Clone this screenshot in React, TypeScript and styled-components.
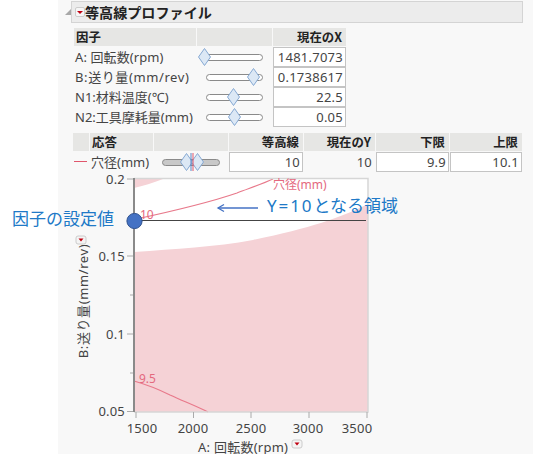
import React from "react";
import styled, { createGlobalStyle } from "styled-components";

const Global = createGlobalStyle`
  html, body { margin: 0; padding: 0; background: #fff; }
  body { width: 533px; height: 454px; overflow: hidden; font-family: "Noto Sans", "Noto Sans CJK JP", sans-serif; color: #333; }
`;
const Page = styled.div`
  position: relative; width: 533px; height: 454px; overflow: hidden;
`;
const Panel = styled.div`
  width: 475px; height: 454px; margin-left: 58px; background: #f8f8f8; padding-top: 1px; box-sizing: border-box;
`;
const Outline = styled.div`
  position: relative; height: 22px; width: 452px; margin-left: 13px; box-sizing: border-box; background: #ececec; border: 1px solid #d4d4d4;
  display: flex; align-items: center; padding-left: 3px;
`;
const Disclosure = styled.span`
  position: absolute; left: -7px; top: 7px; width: 0; height: 0; border-style: solid; border-width: 0 0 6px 6px; border-color: transparent transparent #a8a8a8 transparent;
`;
const RedMenu = styled.span`
  display: inline-flex; align-items: center; justify-content: center; width: 8px; height: 8px; background: #f6f6f6; border: 1px solid #ccc; border-radius: 2px; flex: none;
  &::after { content: ""; border-style: solid; border-width: 3px 3px 0 3px; border-color: #c00010 transparent transparent transparent; }
`;
const Title = styled.span`
  font: 700 14.1px/20px "Noto Sans CJK JP", sans-serif; color: #222;
`;
const FactorGrid = styled.div`
  display: grid; grid-template-columns: 122px 75px 73px; column-gap: 1px; margin: 5px 0 0 16px;
`;
const Head = styled.div<{ $right?: boolean }>`
  height: 18px; margin-bottom: 1px; background: #e6e6e4; font: 700 12.4px/18px "Noto Sans CJK JP", sans-serif; color: #222; box-sizing: border-box; white-space: nowrap;
  padding: 0 ${(p) => (p.$right ? "4px" : "2px")}; text-align: ${(p) => (p.$right ? "right" : "left")};
`;
const Label = styled.div<{ $spacing?: number }>`
  height: 20px; font: 13px/20px "Noto Sans", "Noto Sans CJK JP", sans-serif; color: #444; padding-left: 1px; white-space: nowrap;
  letter-spacing: ${(p) => p.$spacing ?? 0}px;
`;
const SliderCell = styled.div`
  position: relative; height: 20px;
`;
const Track = styled.div<{ $left: number; $width: number; $fill?: boolean }>`
  position: absolute; left: ${(p) => p.$left}px; width: ${(p) => p.$width}px; top: 7px; height: 7px; box-sizing: border-box;
  border: 1px solid #8a8a8a; border-radius: 4px; background: ${(p) => (p.$fill ? "#c8c8c8" : "#fff")};
`;
const Handle = styled.svg<{ $left: number }>`
  position: absolute; left: ${(p) => p.$left}px; top: 1px; overflow: visible;
`;
const ValueBox = styled.div`
  height: 20px; box-sizing: border-box; background: #fff; border: 1px solid #c4c4c4; font: 13px/18px "Noto Sans", sans-serif; color: #444;
  text-align: right; padding-right: 2px; letter-spacing: 0.25px;
`;
const ResponseGrid = styled.div`
  display: grid; grid-template-columns: 16px 63px 74px 74px 71px 73px 72px; column-gap: 1px; margin: 6px 0 0 15px;
`;
const LegendLine = styled.div`
  height: 1px; width: 13px; background: #e0566c; margin: 9px 0 0 1px;
`;
const RespValue = styled.div`
  height: 20px; font: 13px/20px "Noto Sans", sans-serif; color: #444; text-align: right; padding-right: 3px; letter-spacing: 0.25px;
`;
const ChartSvg = styled.svg`
  display: block; margin: 1px 0 0 -58px; overflow: visible;
  text { font-family: "Noto Sans", "Noto Sans CJK JP", sans-serif; }
`;
const Axis = styled.text<{ $spacing?: number }>`
  font-size: 13px; fill: #444; letter-spacing: ${(p) => p.$spacing ?? 0.2}px;
`;
const Contour = styled.text`
  font-size: 12px; fill: #e4697e;
`;
const Callout = styled.div<{ $left: number; $top: number; $size: number }>`
  position: absolute; left: ${(p) => p.$left}px; top: ${(p) => p.$top}px; font: ${(p) => p.$size}px/22px "Noto Sans CJK JP", sans-serif; color: #2079c7; white-space: nowrap;
`;
const Latin = styled.span`
  font-family: "Noto Sans", sans-serif; letter-spacing: 1.9px;
`;

const Diamond = ({ left }: { left: number }) => (
  <Handle $left={left} width="13" height="18" viewBox="0 0 13 18">
    <path d="M6.5 0.5 L12.5 9 L6.5 17.5 L0.5 9 Z" fill="#dce8f5" stroke="#86a9d3" strokeWidth="1" />
  </Handle>
);

const factors = [
  { name: "A: 回転数(rpm)", spacing: 0.1, tl: 3, tw: 63, d: 1, val: "1481.7073" },
  { name: "B:送り量(mm/rev)", spacing: 0.6, tl: 9, tw: 57, d: 50, val: "0.1738617" },
  { name: "N1:材料温度(℃)", spacing: 0, tl: 9, tw: 57, d: 30, val: "22.5" },
  { name: "N2:工具摩耗量(mm)", spacing: 0, tl: 9, tw: 57, d: 31, val: "0.05" },
];

const MenuMark = ({ x, y }: { x: number; y: number }) => (
  <g>
    <rect x={x} y={y} width="10" height="8" rx="2" fill="#f4f4f4" stroke="#ccc" />
    <path d={`M${x + 2.5} ${y + 2.5} h5 l-2.5 3 Z`} fill="#c00010" />
  </g>
);

const Plot = () => (
  <ChartSvg width="533" height="281" viewBox="0 173 533 281">
    <rect x="134" y="179" width="234" height="233" fill="#fff" />
    <path d="M134 179 H163 C153 183 143 186 134 188 Z" fill="#f5d2d6" />
    <path d="M368 204 C340 218 310 228 253 240 C215 247 175 249 134 252 V412 H368 Z" fill="#f5d2d6" />
    <path d="M134 219.5 C155 215 205 204 237 193 C250 188 262 184 273 179" fill="none" stroke="#e8798b" strokeWidth="1.2" />
    <path d="M134 381 C148 385 160 390 170 395 C183 401 196 406 208 412" fill="none" stroke="#e8798b" strokeWidth="1.2" />
    <path d="M134 178.5 H368 V412 H134" fill="none" stroke="#d6d6d6" strokeWidth="1.5" />
    <path d="M134 178 V412" stroke="#8a8a8a" strokeWidth="2" />
    <path d="M134 220.5 H366" stroke="#444" strokeWidth="1" />
    <path d="M127 179 H133 M127 256 H133 M127 334 H133 M127 411.5 H133 M130 217 H133 M130 295 H133 M130 373 H133" stroke="#aaa" />
    <path d="M136 412 V418 M193.5 412 V418 M251 412 V418 M309 412 V418 M367 412 V418" stroke="#aaa" />
    <Contour x="140" y="219">10</Contour>
    <Contour x="139" y="382.5">9.5</Contour>
    <Contour x="273" y="188.5">穴径(mm)</Contour>
    <circle cx="134.5" cy="221" r="7.6" fill="#4472c4" stroke="#2f528f" strokeWidth="1" />
    <path d="M218 208 H258" stroke="#4472c4" strokeWidth="1.3" />
    <path d="M224 204.5 L218 208 L224 211.5" fill="none" stroke="#4472c4" strokeWidth="1.3" />
    <Axis x="125" y="184" textAnchor="end">0.2</Axis>
    <Axis x="125" y="261" textAnchor="end">0.15</Axis>
    <Axis x="125" y="339" textAnchor="end">0.1</Axis>
    <Axis x="125" y="416" textAnchor="end">0.05</Axis>
    <Axis x="142" y="433" textAnchor="middle">1500</Axis>
    <Axis x="193" y="433" textAnchor="middle">2000</Axis>
    <Axis x="251" y="433" textAnchor="middle">2500</Axis>
    <Axis x="308" y="433" textAnchor="middle">3000</Axis>
    <Axis x="357" y="433" textAnchor="middle">3500</Axis>
    <Axis x="198" y="451.5" $spacing={0.25}>A: 回転数(rpm)</Axis>
    <Axis x="0" y="0" textAnchor="middle" $spacing={0.6} transform="translate(88 301) rotate(-90)">B:送り量(mm/rev)</Axis>
    <MenuMark x={292} y={440} />
    <MenuMark x={76} y={236} />
  </ChartSvg>
);

export default function App() {
  return (
    <Page>
      <Global />
      <Panel>
        <Outline>
          <Disclosure />
          <RedMenu />
          <Title>等高線プロファイル</Title>
        </Outline>
        <FactorGrid>
          <Head>因子</Head>
          <Head />
          <Head $right>現在のX</Head>
          {factors.map((f) => (
            <React.Fragment key={f.name}>
              <Label $spacing={f.spacing}>{f.name}</Label>
              <SliderCell>
                <Track $left={f.tl} $width={f.tw} />
                <Diamond left={f.d} />
              </SliderCell>
              <ValueBox>{f.val}</ValueBox>
            </React.Fragment>
          ))}
        </FactorGrid>
        <ResponseGrid>
          <Head />
          <Head>応答</Head>
          <Head />
          <Head $right>等高線</Head>
          <Head $right>現在のY</Head>
          <Head $right>下限</Head>
          <Head $right>上限</Head>
          <LegendLine />
          <Label>穴径(mm)</Label>
          <SliderCell>
            <Track $left={8} $width={58} $fill />
            <Diamond left={26} />
            <Diamond left={37} />
            <Handle $left={36} width="4" height="18" viewBox="0 0 4 18">
              <path d="M1 0 V18" stroke="#5b86c4" strokeWidth="1" />
              <path d="M3 0 V18" stroke="#e0566c" strokeWidth="1" />
            </Handle>
          </SliderCell>
          <ValueBox>10</ValueBox>
          <RespValue>10</RespValue>
          <ValueBox>9.9</ValueBox>
          <ValueBox>10.1</ValueBox>
        </ResponseGrid>
        <Plot />
      </Panel>
      <Callout $left={12} $top={207} $size={17}>因子の設定値</Callout>
      <Callout $left={267} $top={194} $size={17}><Latin>Y=10</Latin>となる領域</Callout>
    </Page>
  );
}
